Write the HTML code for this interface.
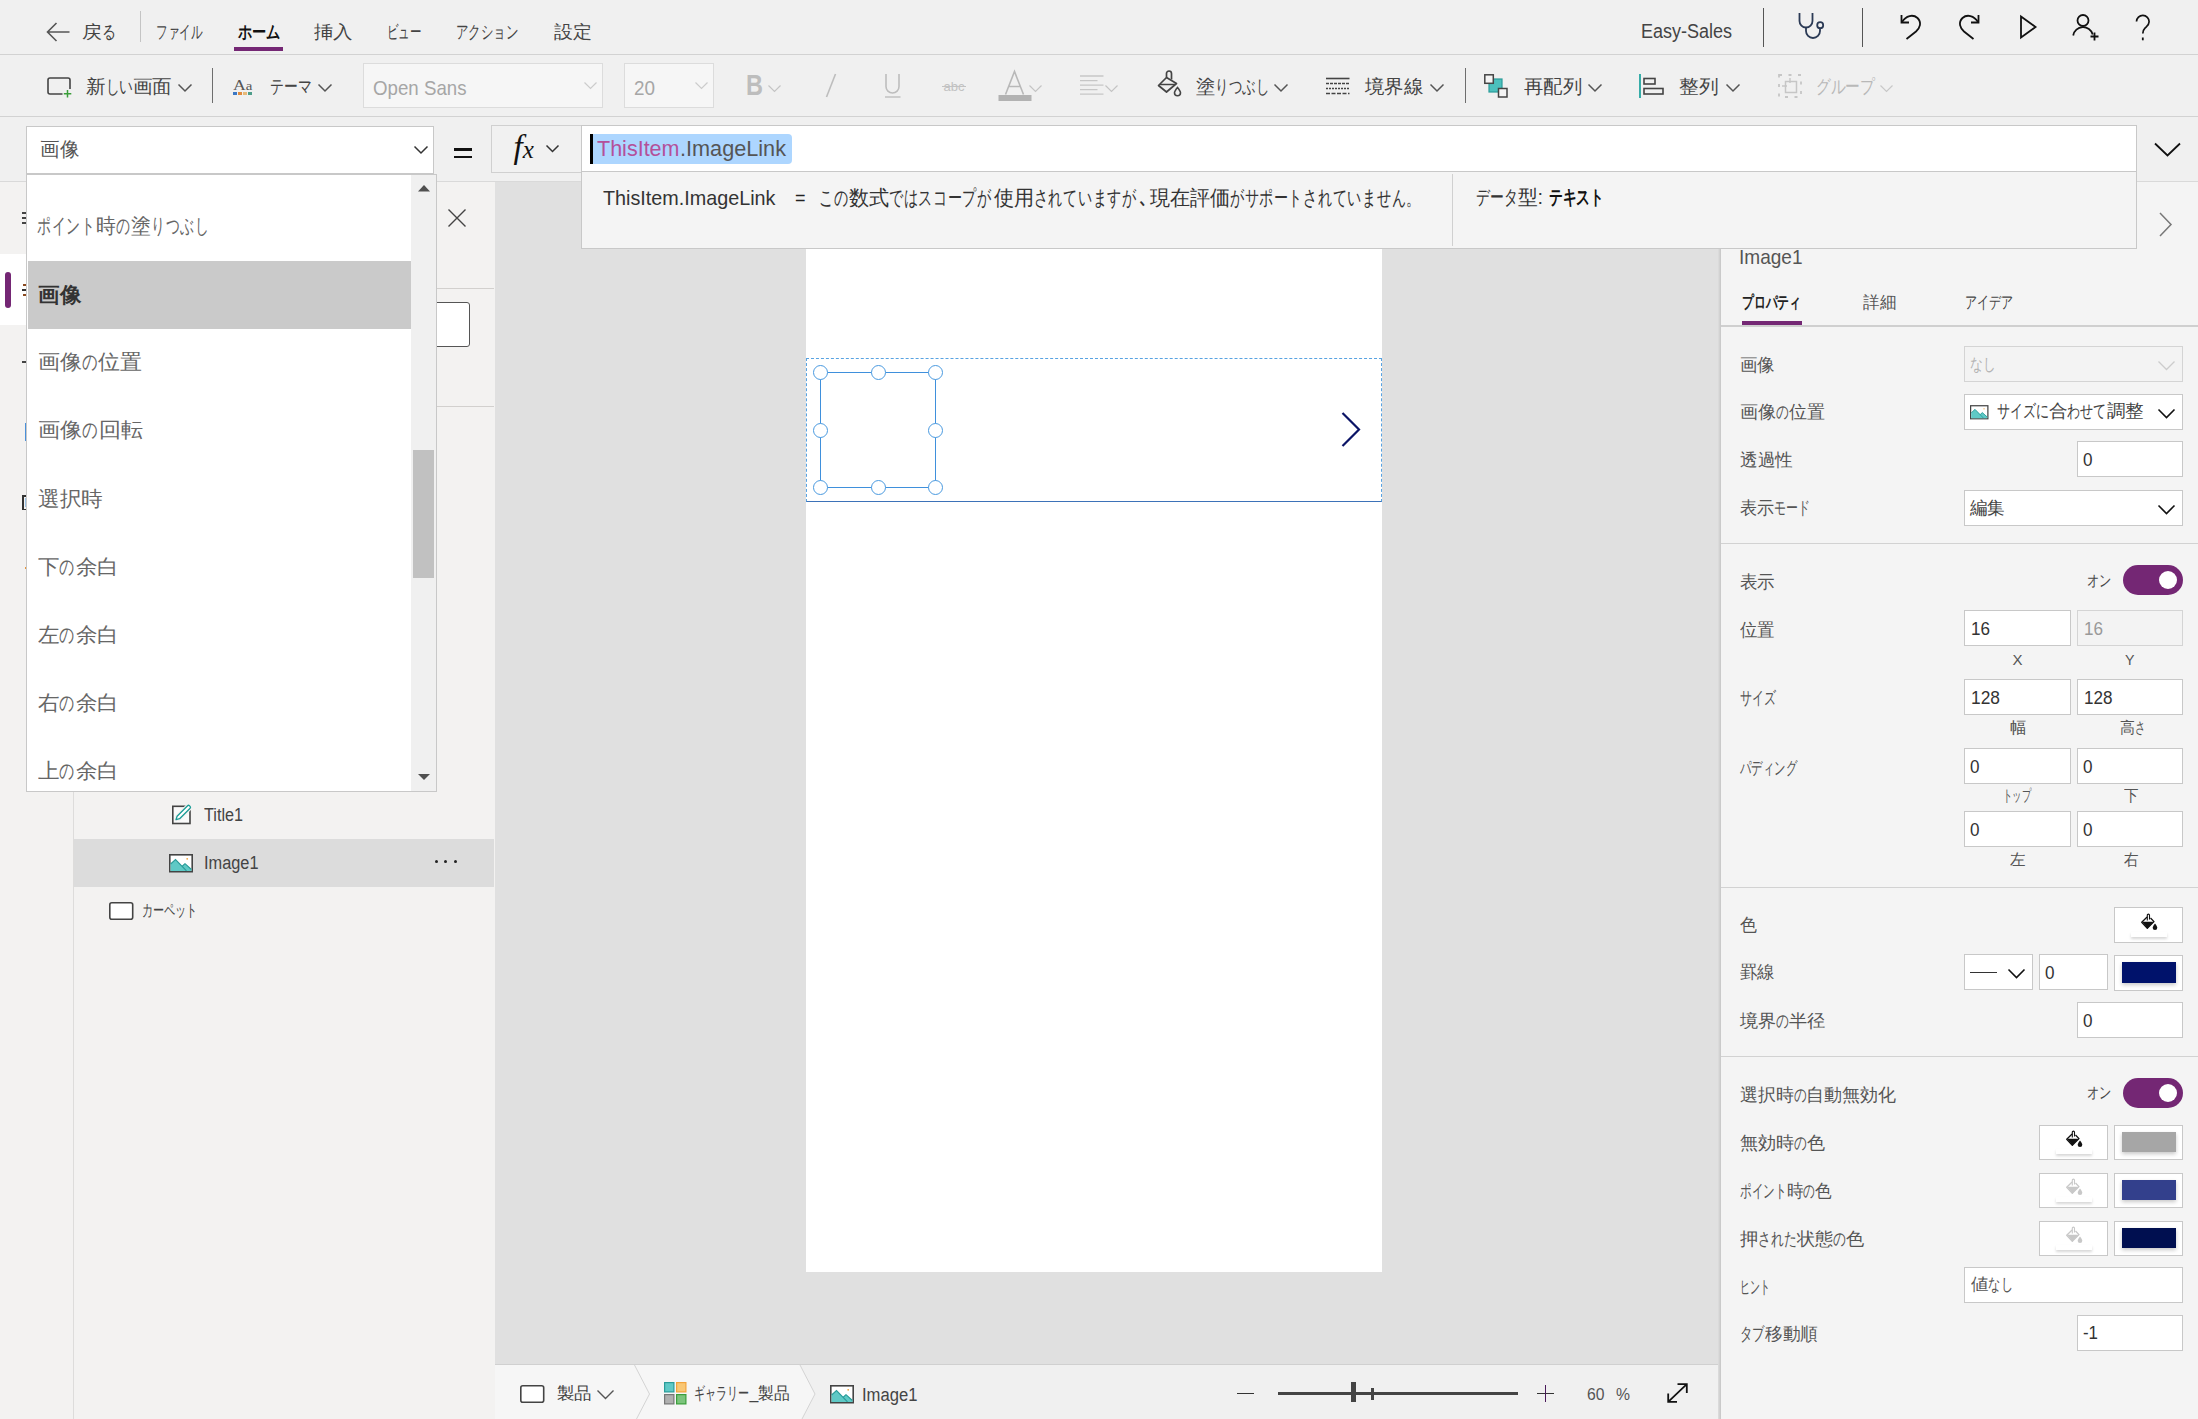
<!DOCTYPE html>
<html lang="ja">
<head>
<meta charset="utf-8">
<title>Power Apps Studio</title>
<style>
*{box-sizing:border-box;margin:0;padding:0}
html,body{width:2198px;height:1419px;overflow:hidden;background:#f0f0f0}
body{font-family:"Liberation Sans",sans-serif;color:#444;position:relative;font-size:18px}
.a{position:absolute}
.t{position:absolute;white-space:nowrap;line-height:1;transform-origin:0 50%;display:block}
svg{position:absolute;overflow:visible}
.k{display:inline-block;transform:scaleX(.70);transform-origin:0 50%}
</style>
</head>
<body>
<div class="a" style="left:0px;top:0px;width:2198px;height:54px;background:#f0f0f0;"></div>
<div class="a" style="left:0px;top:54px;width:2198px;height:1px;background:#d2d2d2;"></div>
<div class="a" style="left:0px;top:55px;width:2198px;height:61px;background:#f0f0f0;"></div>
<div class="a" style="left:0px;top:116px;width:2198px;height:1px;background:#d2d2d2;"></div>
<div class="a" style="left:0px;top:117px;width:2198px;height:64px;background:#f0f0f0;"></div>
<div class="a" style="left:0px;top:181px;width:2198px;height:1px;background:#d9d9d9;"></div>
<div class="a" style="left:0px;top:182px;width:73px;height:1237px;background:#f3f2f1;"></div>
<div class="a" style="left:73px;top:182px;width:1px;height:1237px;background:#dddcdb;"></div>
<div class="a" style="left:74px;top:182px;width:421px;height:1237px;background:#f3f2f1;"></div>
<div class="a" style="left:495px;top:182px;width:1224px;height:1182px;background:#e0e0e0;"></div>
<div class="a" style="left:806px;top:240px;width:576px;height:1032px;background:#fff;"></div>
<div class="a" style="left:495px;top:1364px;width:1224px;height:55px;background:#f0f0f0;"></div>
<div class="a" style="left:495px;top:1364px;width:1224px;height:1px;background:#d0d0d0;"></div>
<div class="a" style="left:1718px;top:182px;width:3px;height:1237px;background:#d0d0d0;background:linear-gradient(to right,#dedede,#c6c6c6);"></div>
<div class="a" style="left:1721px;top:182px;width:477px;height:1237px;background:#f4f4f4;"></div>
<svg style="left:46px;top:22px" width="24" height="20" viewBox="0 0 24 20"><path d="M23.5 10 H1.5 M10.5 1 L1.5 10 L10.5 19" fill="none" stroke="#555" stroke-width="1.6"/></svg>
<div class="a" style="left:139.5px;top:11px;width:1.5px;height:31px;background:#c4c4c4;"></div>
<div class="a" style="left:234px;top:47px;width:49px;height:4px;background:#742774;"></div>
<div class="a" style="left:1762.5px;top:8px;width:1.5px;height:38.5px;background:#555;"></div>
<div class="a" style="left:1861.5px;top:8px;width:1.5px;height:38.5px;background:#555;"></div>
<svg style="left:1797px;top:12px" width="28" height="28" viewBox="0 0 28 28"><path d="M2.5 1 v8 a6.5 6.5 0 0 0 13 0 v-8" fill="none" stroke="#2b3a55" stroke-width="1.8"/><path d="M9 15.5 v3.5 a7 7 0 0 0 14 0 v-2.5" fill="none" stroke="#2b3a55" stroke-width="1.8"/><circle cx="23.2" cy="13.2" r="3" fill="none" stroke="#2b3a55" stroke-width="1.8"/></svg>
<svg style="left:1900px;top:13px" width="22" height="27" viewBox="0 0 22 27"><path d="M1.5 2 v7.5 h7.5" fill="none" stroke="#111" stroke-width="1.8"/><path d="M2 9 C6 2.5 13 1 17.5 5 C22 9.5 20 15 16 18.5 L6.5 26" fill="none" stroke="#111" stroke-width="1.8"/></svg>
<svg style="left:1958px;top:13px" width="22" height="27" viewBox="0 0 22 27"><path d="M20.5 2 v7.5 h-7.5" fill="none" stroke="#111" stroke-width="1.8"/><path d="M20 9 C16 2.5 9 1 4.5 5 C0 9.5 2 15 6 18.5 L15.500 26" fill="none" stroke="#111" stroke-width="1.8"/></svg>
<svg style="left:2019px;top:15px" width="18" height="24" viewBox="0 0 18 24"><path d="M2 1.5 L16.5 12 L2 22.500 Z" fill="none" stroke="#111" stroke-width="1.8" stroke-linejoin="miter"/></svg>
<svg style="left:2072px;top:13px" width="28" height="28" viewBox="0 0 28 28"><circle cx="11" cy="7.5" r="5.5" fill="none" stroke="#111" stroke-width="1.8"/><path d="M1.2 22.500 a10 10 0 0 1 19.5 -1" fill="none" stroke="#111" stroke-width="1.8"/><path d="M22.500 19.500 v8 M18.500 23.5 h8" fill="none" stroke="#111" stroke-width="1.8"/></svg>
<svg style="left:2135px;top:14px" width="16" height="28" viewBox="0 0 16 28"><path d="M1.5 7.500 a6.300 6.300 0 0 1 12.600 0.300 c0 3.500 -2.500 4.800 -4.300 6.500 c-1.500 1.400 -2 2.500 -2 5.200" fill="none" stroke="#111" stroke-width="1.7"/><path d="M7.800 23.500 v2.800" stroke="#111" stroke-width="1.8"/></svg>
<svg style="left:47px;top:77px" width="25" height="20" viewBox="0 0 25 20"><rect x="1" y="1" width="22" height="16" rx="2" fill="none" stroke="#444" stroke-width="1.6"/><rect x="15.500" y="12" width="10" height="9" fill="#f0f0f0"/><path d="M20.500 13 v7.500 M16.800 16.800 h7.500" stroke="#3a9e3a" stroke-width="1.5"/></svg>
<svg style="left:177.5px;top:84.25px" width="14" height="7.5" viewBox="0 0 14 7.5"><path d="M0.5 0.5 L7.0 7.0 L13.5 0.5" fill="none" stroke="#555" stroke-width="1.5"/></svg>
<div class="a" style="left:212px;top:68px;width:1px;height:35px;background:#6e6e6e;"></div>
<div class="a" style="left:232.5px;top:91.5px;width:4.0px;height:3.5px;background:#3b78c4;"></div>
<div class="a" style="left:237.5px;top:91.5px;width:4.0px;height:3.5px;background:#e08a3c;"></div>
<div class="a" style="left:242.5px;top:91.5px;width:4.0px;height:3.5px;background:#e8b978;"></div>
<div class="a" style="left:247.5px;top:91.5px;width:4.0px;height:3.5px;background:#4e9d8a;"></div>
<svg style="left:318.0px;top:84.25px" width="14" height="7.5" viewBox="0 0 14 7.5"><path d="M0.5 0.5 L7.0 7.0 L13.5 0.5" fill="none" stroke="#555" stroke-width="1.5"/></svg>
<div class="a" style="left:363px;top:63px;width:240px;height:44.5px;background:#f6f6f6;border:1px solid #dcdcdc;"></div>
<svg style="left:584.0px;top:82.0px" width="13" height="7" viewBox="0 0 13 7"><path d="M0.5 0.5 L6.5 6.5 L12.5 0.5" fill="none" stroke="#ccc" stroke-width="1.2"/></svg>
<div class="a" style="left:624px;top:63px;width:90px;height:44.5px;background:#f6f6f6;border:1px solid #dcdcdc;"></div>
<svg style="left:694.5px;top:82.0px" width="13" height="7" viewBox="0 0 13 7"><path d="M0.5 0.5 L6.5 6.5 L12.5 0.5" fill="none" stroke="#ccc" stroke-width="1.2"/></svg>
<svg style="left:768.0px;top:84.5px" width="13" height="7" viewBox="0 0 13 7"><path d="M0.5 0.5 L6.5 6.5 L12.5 0.5" fill="none" stroke="#c4c4c4" stroke-width="1.2"/></svg>
<svg style="left:825px;top:73px" width="12" height="25" viewBox="0 0 12 25"><path d="M10.500 1 L1.5 24" stroke="#bdbdbd" stroke-width="1.6"/></svg>
<svg style="left:884px;top:73px" width="18" height="26" viewBox="0 0 18 26"><path d="M2 1 v12.500 a6.500 6.500 0 0 0 13 0 v-12.500" fill="none" stroke="#bdbdbd" stroke-width="1.6"/><path d="M1 24 h15.500" stroke="#bdbdbd" stroke-width="1.4"/></svg>
<div class="a" style="left:942px;top:86px;width:24px;height:1px;background:#c2c2c2;"></div>
<svg style="left:998px;top:70px" width="34" height="32" viewBox="0 0 34 32"><path d="M7.5 24.5 L16.500 1.5 L25.500 24.5 M10.800 16.500 h11.400" fill="none" stroke="#b8b8b8" stroke-width="1.6"/><rect x="0.5" y="25" width="33" height="6" fill="#b2b2b2"/></svg>
<svg style="left:1029.0px;top:84.5px" width="13" height="7" viewBox="0 0 13 7"><path d="M0.5 0.5 L6.5 6.5 L12.5 0.5" fill="none" stroke="#c4c4c4" stroke-width="1.2"/></svg>
<svg style="left:1080px;top:75px" width="24" height="21" viewBox="0 0 24 21"><path d="M0 1 h23.500 M0 5.600 h17.500 M0 10.100 h23.500 M0 14.700 h17.500 M0 19.200 h23.500" stroke="#c6c6c6" stroke-width="1.3"/></svg>
<svg style="left:1105.0px;top:84.5px" width="13" height="7" viewBox="0 0 13 7"><path d="M0.5 0.5 L6.5 6.5 L12.5 0.5" fill="none" stroke="#c4c4c4" stroke-width="1.2"/></svg>
<svg style="left:1157px;top:70px" width="25" height="26" viewBox="0 0 25 26"><path d="M9.500 7.500 L1.5 15.500 L9.500 22 L19.500 13.500 Z" fill="none" stroke="#444" stroke-width="1.7" stroke-linejoin="round"/><path d="M9.500 7.500 v-4 a2.500 2.500 0 0 1 5 0 v6" fill="none" stroke="#444" stroke-width="1.7"/><path d="M3 14.500 h15" stroke="#444" stroke-width="1.5"/><path d="M20.500 17.500 c-2 2.500 -3 4 -3 5.300 a3 3 0 0 0 6 0 c0 -1.300 -1 -2.800 -3 -5.300z" fill="none" stroke="#444" stroke-width="1.6"/></svg>
<svg style="left:1273.5px;top:84.25px" width="14" height="7.5" viewBox="0 0 14 7.5"><path d="M0.5 0.5 L7.0 7.0 L13.5 0.5" fill="none" stroke="#555" stroke-width="1.5"/></svg>
<svg style="left:1325.5px;top:77px" width="24" height="18" viewBox="0 0 24 18"><path d="M0 1.5 h23.500" stroke="#444" stroke-width="1.6"/><path d="M0 6.500 h23.500" stroke="#444" stroke-width="1.4" stroke-dasharray="3 1"/><path d="M0 11.500 h23.500" stroke="#444" stroke-width="1.4" stroke-dasharray="2 1"/><path d="M0 16.500 h23.500" stroke="#444" stroke-width="1.6" stroke-dasharray="4 1.5"/></svg>
<svg style="left:1430.0px;top:84.25px" width="14" height="7.5" viewBox="0 0 14 7.5"><path d="M0.5 0.5 L7.0 7.0 L13.5 0.5" fill="none" stroke="#555" stroke-width="1.5"/></svg>
<div class="a" style="left:1465px;top:68px;width:1px;height:35px;background:#6e6e6e;"></div>
<svg style="left:1484px;top:74px" width="24" height="24" viewBox="0 0 24 24"><rect x="5" y="5" width="13" height="13" fill="#4cc0bd" stroke="#2a9c99" stroke-width="1.2"/><rect x="0.8" y="0.8" width="8.5" height="8.5" fill="#f4f4f4" stroke="#444" stroke-width="1.5"/><rect x="14.500" y="14.500" width="8.5" height="8.5" fill="#f4f4f4" stroke="#444" stroke-width="1.5"/></svg>
<svg style="left:1587.5px;top:84.25px" width="14" height="7.5" viewBox="0 0 14 7.5"><path d="M0.5 0.5 L7.0 7.0 L13.5 0.5" fill="none" stroke="#555" stroke-width="1.5"/></svg>
<svg style="left:1639px;top:74px" width="26" height="24" viewBox="0 0 26 24"><path d="M1 0 v24" stroke="#22a5a0" stroke-width="1.8"/><rect x="5" y="4.500" width="11" height="5.500" fill="none" stroke="#444" stroke-width="1.6"/><rect x="5" y="14.500" width="19" height="5.500" fill="none" stroke="#444" stroke-width="1.6"/></svg>
<svg style="left:1725.5px;top:84.25px" width="14" height="7.5" viewBox="0 0 14 7.5"><path d="M0.5 0.5 L7.0 7.0 L13.5 0.5" fill="none" stroke="#555" stroke-width="1.5"/></svg>
<svg style="left:1778px;top:74px" width="24" height="24" viewBox="0 0 24 24"><rect x="1" y="1" width="22" height="22" fill="none" stroke="#c6c6c6" stroke-width="1.8" stroke-dasharray="3 6.500" /><rect x="7.500" y="7.500" width="11" height="11" fill="none" stroke="#c6c6c6" stroke-width="1.5"/><path d="M12 4 v5 M4 12 h5" stroke="#c6c6c6" stroke-width="1.4"/></svg>
<svg style="left:1880.0px;top:84.5px" width="13" height="7" viewBox="0 0 13 7"><path d="M0.5 0.5 L6.5 6.5 L12.5 0.5" fill="none" stroke="#c8c8c8" stroke-width="1.2"/></svg>
<div class="a" style="left:26px;top:126px;width:408px;height:48px;background:#fff;border:1px solid #c8c8c8;"></div>
<svg style="left:413.5px;top:146.25px" width="14" height="7.5" viewBox="0 0 14 7.5"><path d="M0.5 0.5 L7.0 7.0 L13.5 0.5" fill="none" stroke="#333" stroke-width="1.5"/></svg>
<div class="a" style="left:454px;top:148px;width:18px;height:2.5px;background:#111;"></div>
<div class="a" style="left:454px;top:155.5px;width:18px;height:2.5px;background:#111;"></div>
<div class="a" style="left:491px;top:125px;width:91px;height:47.5px;background:#f1f1f1;border:1px solid #d0d0d0;"></div>
<svg style="left:546.0px;top:145.0px" width="13" height="7" viewBox="0 0 13 7"><path d="M0.5 0.5 L6.5 6.5 L12.5 0.5" fill="none" stroke="#333" stroke-width="1.5"/></svg>
<div class="a" style="left:581px;top:125px;width:1555.5px;height:47px;background:#fff;border:1px solid #c8c8c8;"></div>
<div class="a" style="left:590px;top:134px;width:202px;height:30px;background:#add6ff;border-radius:4px;"></div>
<div class="a" style="left:590px;top:134px;width:3px;height:30px;background:#000;"></div>
<svg style="left:2154px;top:142px" width="27" height="15" viewBox="0 0 27 15"><path d="M1 1.500 L13.500 13.500 L26 1.500" fill="none" stroke="#111" stroke-width="1.8"/></svg>
<div class="a" style="left:581px;top:171px;width:1555.5px;height:78px;background:#f4f4f4;border:1px solid #c8c8c8;"></div>
<div class="a" style="left:1452px;top:174px;width:1px;height:72px;background:#d0d0d0;"></div>
<svg style="left:2159px;top:212px" width="13" height="25" viewBox="0 0 13 25"><path d="M1 1 L12 12.500 L1 24" fill="none" stroke="#777" stroke-width="1.5"/></svg>
<div class="a" style="left:0px;top:254px;width:73px;height:71px;background:#fff;"></div>
<div class="a" style="left:5px;top:272px;width:6px;height:36px;background:#742774;border-radius:3px;"></div>
<div class="a" style="left:22px;top:212px;width:4px;height:1.5px;background:#444;"></div>
<div class="a" style="left:22px;top:217px;width:4px;height:1.5px;background:#444;"></div>
<div class="a" style="left:22px;top:222px;width:4px;height:1.5px;background:#444;"></div>
<div class="a" style="left:23px;top:284px;width:3px;height:1.5px;background:#8a4a20;"></div>
<div class="a" style="left:22px;top:289px;width:4px;height:1.5px;background:#333;"></div>
<div class="a" style="left:23px;top:294px;width:3px;height:1.5px;background:#8a4a20;"></div>
<div class="a" style="left:22px;top:361px;width:4px;height:1.5px;background:#444;"></div>
<div class="a" style="left:25px;top:423px;width:2px;height:18px;background:#4a90d9;"></div>
<div class="a" style="left:22px;top:495px;width:2px;height:15px;background:#333;"></div>
<div class="a" style="left:24px;top:495px;width:2px;height:1.5px;background:#333;"></div>
<div class="a" style="left:24px;top:508.5px;width:2px;height:1.5px;background:#333;"></div>
<div class="a" style="left:24.5px;top:498px;width:2.0px;height:9px;background:#9cc3e6;"></div>
<div class="a" style="left:24.5px;top:567px;width:2.0px;height:2px;background:#e8963c;"></div>
<svg style="left:447.5px;top:209px" width="18" height="18" viewBox="0 0 18 18"><path d="M0.5 0.5 L17.5 17.5 M17.5 0.5 L0.5 17.5" stroke="#444" stroke-width="1.4"/></svg>
<div class="a" style="left:436px;top:288px;width:58px;height:1px;background:#d2d0ce;"></div>
<div class="a" style="left:400px;top:302px;width:70px;height:45px;background:#fff;border:1px solid #555;border-radius:3px;"></div>
<div class="a" style="left:436px;top:406px;width:58px;height:1px;background:#d2d0ce;"></div>
<svg style="left:172px;top:804px" width="20" height="21" viewBox="0 0 20 21"><rect x="0.8" y="2.3" width="17.2" height="17.2" fill="#fafafa" stroke="#444" stroke-width="1.6"/><path d="M4 15.600 L5.100 12.200 L15.600 1.700 a1.300 1.300 0 0 1 1.800 0 l0.700 0.700 a1.300 1.300 0 0 1 0 1.800 L7.600 14.700 Z" fill="#fff" stroke="#f3f2f1" stroke-width="3.6" stroke-linejoin="round"/><path d="M4 15.600 L5.100 12.200 L15.600 1.700 a1.300 1.300 0 0 1 1.800 0 l0.700 0.700 a1.300 1.300 0 0 1 0 1.800 L7.600 14.700 Z" fill="#fff" stroke="#1a9c96" stroke-width="1.300" stroke-linejoin="round"/></svg>
<div class="a" style="left:74px;top:839px;width:420px;height:48px;background:#dcdcdc;"></div>
<svg style="left:169px;top:854px" width="24" height="18.5" viewBox="0 0 24 18.5"><rect x="0.8" y="0.8" width="22.4" height="16.900" fill="#fff" stroke="#444" stroke-width="1.6"/><path d="M1.6 17 V10 L6.500 5.500 L13 12 L16 9.500 L22.400 15 V17 Z" fill="#5fc9c6"/><path d="M1.6 10 L6.500 5.500 L17.5 16.900 M13.500 12 L16 9.700 L22.400 15.500" fill="none" stroke="#2a9c99" stroke-width="1.1"/><circle cx="18.200" cy="4.800" r="0.9" fill="#f2a33c"/></svg>
<div class="a" style="left:434.5px;top:859.5px;width:3px;height:3px;border-radius:50%;background:#222"></div>
<div class="a" style="left:444.0px;top:859.5px;width:3px;height:3px;border-radius:50%;background:#222"></div>
<div class="a" style="left:454.0px;top:859.5px;width:3px;height:3px;border-radius:50%;background:#222"></div>
<svg style="left:109px;top:902px" width="24.5" height="18" viewBox="0 0 24.5 18"><rect x="0.8" y="0.8" width="22.900" height="16.400" rx="2" fill="#fff" stroke="#444" stroke-width="1.6"/></svg>
<div class="a" style="left:806px;top:249px;width:576px;height:1023px;background:#fff;"></div>
<div class="a" style="left:806px;top:357.5px;width:576px;height:144.500px;border:1px dashed #58a3e2;border-bottom:1.500px solid #3d72b8"></div>
<div class="a" style="left:819.5px;top:371.5px;width:116.500px;height:116px;border:1.3px solid #3f90dc"></div>
<div class="a" style="left:812.7px;top:364.7px;width:15px;height:15px;border-radius:50%;background:#fff;border:1.400px solid #4a9ae0"></div>
<div class="a" style="left:812.7px;top:422.5px;width:15px;height:15px;border-radius:50%;background:#fff;border:1.400px solid #4a9ae0"></div>
<div class="a" style="left:812.7px;top:479.7px;width:15px;height:15px;border-radius:50%;background:#fff;border:1.400px solid #4a9ae0"></div>
<div class="a" style="left:870.5px;top:364.7px;width:15px;height:15px;border-radius:50%;background:#fff;border:1.400px solid #4a9ae0"></div>
<div class="a" style="left:870.5px;top:479.7px;width:15px;height:15px;border-radius:50%;background:#fff;border:1.400px solid #4a9ae0"></div>
<div class="a" style="left:928.2px;top:364.7px;width:15px;height:15px;border-radius:50%;background:#fff;border:1.400px solid #4a9ae0"></div>
<div class="a" style="left:928.2px;top:422.5px;width:15px;height:15px;border-radius:50%;background:#fff;border:1.400px solid #4a9ae0"></div>
<div class="a" style="left:928.2px;top:479.7px;width:15px;height:15px;border-radius:50%;background:#fff;border:1.400px solid #4a9ae0"></div>
<svg style="left:1341px;top:412px" width="20" height="35" viewBox="0 0 20 35"><path d="M1.5 1 L18 17.5 L1.5 34" fill="none" stroke="#0b1466" stroke-width="2.2"/></svg>
<svg style="left:495px;top:1365px" width="325" height="54" viewBox="0 0 325 54"><path d="M0 0 H305 L320 29 L307 54 H0 Z" fill="#f6f6f6"/><path d="M139.500 0 L154.500 29 L141.500 54 M305 0 L320 29 L307 54" fill="none" stroke="#d4d4d4" stroke-width="1"/></svg>
<svg style="left:520px;top:1384.5px" width="24.5" height="18" viewBox="0 0 24.5 18"><rect x="0.8" y="0.8" width="22.900" height="16.400" rx="2" fill="#fff" stroke="#444" stroke-width="1.6"/></svg>
<svg style="left:597.0px;top:1389.5px" width="17" height="9" viewBox="0 0 17 9"><path d="M0.5 0.5 L8.5 8.5 L16.5 0.5" fill="none" stroke="#555" stroke-width="1.4"/></svg>
<svg style="left:664px;top:1382px" width="23" height="22.5" viewBox="0 0 23 22.5"><rect x="0.6" y="0.6" width="9.300" height="9.300" fill="#5fc9c6" stroke="#2a9c99" stroke-width="1.2"/><rect x="12.600" y="0.6" width="9.300" height="9.300" fill="#f9c774" stroke="#f2a33c" stroke-width="1.2"/><rect x="0.6" y="12.600" width="9.300" height="9.300" fill="#b0b0b0" stroke="#777" stroke-width="1.2"/><rect x="12.600" y="12.600" width="9.300" height="9.300" fill="#7cc47c" stroke="#3a9e3a" stroke-width="1.2"/></svg>
<svg style="left:830px;top:1384.5px" width="24" height="18.5" viewBox="0 0 24 18.5"><rect x="0.8" y="0.8" width="22.4" height="16.900" fill="#fff" stroke="#444" stroke-width="1.6"/><path d="M1.6 17 V10 L6.500 5.500 L13 12 L16 9.500 L22.400 15 V17 Z" fill="#5fc9c6"/><path d="M1.6 10 L6.500 5.500 L17.5 16.900 M13.500 12 L16 9.700 L22.400 15.500" fill="none" stroke="#2a9c99" stroke-width="1.1"/><circle cx="18.200" cy="4.800" r="0.9" fill="#f2a33c"/></svg>
<div class="a" style="left:1237px;top:1392.5px;width:17px;height:1.5px;background:#333;"></div>
<div class="a" style="left:1278px;top:1391.5px;width:240px;height:3.0px;background:#444;"></div>
<div class="a" style="left:1350.5px;top:1381.5px;width:5.5px;height:20.5px;background:#444;"></div>
<div class="a" style="left:1371px;top:1387.5px;width:2.5px;height:12.0px;background:#444;"></div>
<div class="a" style="left:1537px;top:1392.5px;width:17px;height:1.5px;background:#333;"></div>
<div class="a" style="left:1544.5px;top:1384.5px;width:1.5px;height:17.5px;background:#4a1a5a;"></div>
<svg style="left:1667px;top:1383px" width="21" height="20" viewBox="0 0 21 20"><path d="M1.2 18.800 L19.800 1.2 M10.500 1.2 H19.800 V10 M1.2 10.500 V18.800 H10" fill="none" stroke="#111" stroke-width="1.8"/></svg>
<div class="a" style="left:1742px;top:321px;width:60px;height:4px;background:#742774;"></div>
<div class="a" style="left:1721px;top:325px;width:477px;height:1.5px;background:#cfcfcf;"></div>
<div class="a" style="left:1964px;top:346px;width:218.5px;height:35.5px;background:#f3f3f3;border:1px solid #d4d4d4;"></div>
<svg style="left:2158.0px;top:361.0px" width="17" height="9" viewBox="0 0 17 9"><path d="M0.5 0.5 L8.5 8.5 L16.5 0.5" fill="none" stroke="#ccc" stroke-width="1.3"/></svg>
<div class="a" style="left:1964px;top:394px;width:218.5px;height:35.5px;background:#fff;border:1px solid #c8c8c8;"></div>
<svg style="left:1970px;top:405px" width="18.5" height="14.5" viewBox="0 0 24 18.5"><rect x="0.8" y="0.8" width="22.4" height="16.900" fill="#fff" stroke="#444" stroke-width="1.6"/><path d="M1.6 17 V10 L6.500 5.500 L13 12 L16 9.500 L22.400 15 V17 Z" fill="#5fc9c6"/><path d="M1.6 10 L6.500 5.500 L17.5 16.900 M13.500 12 L16 9.700 L22.400 15.500" fill="none" stroke="#2a9c99" stroke-width="1.1"/><circle cx="18.200" cy="4.800" r="0.9" fill="#f2a33c"/></svg>
<svg style="left:2158.0px;top:408.5px" width="17" height="9" viewBox="0 0 17 9"><path d="M0.5 0.5 L8.5 8.5 L16.5 0.5" fill="none" stroke="#111" stroke-width="1.6"/></svg>
<div class="a" style="left:2077px;top:441px;width:105.5px;height:36px;background:#fff;border:1px solid #c8c8c8;"></div>
<div class="a" style="left:1964px;top:490px;width:218.5px;height:35.5px;background:#fff;border:1px solid #c8c8c8;"></div>
<svg style="left:2158.0px;top:504.5px" width="17" height="9" viewBox="0 0 17 9"><path d="M0.5 0.5 L8.5 8.5 L16.5 0.5" fill="none" stroke="#111" stroke-width="1.6"/></svg>
<div class="a" style="left:1721px;top:543px;width:477px;height:1px;background:#d2d2d2;"></div>
<div class="a" style="left:2123px;top:565px;width:60px;height:30px;border-radius:15px;background:#742774"></div>
<div class="a" style="left:2159px;top:571px;width:18px;height:18px;border-radius:50%;background:#fff"></div>
<div class="a" style="left:1964px;top:610px;width:106.5px;height:35.5px;background:#fff;border:1px solid #c8c8c8;"></div>
<div class="a" style="left:2077px;top:610px;width:105.69999999999982px;height:35.5px;background:#f3f3f3;border:1px solid #d4d4d4;"></div>
<div class="a" style="left:1964px;top:679px;width:106.5px;height:35.5px;background:#fff;border:1px solid #c8c8c8;"></div>
<div class="a" style="left:2077px;top:679px;width:105.69999999999982px;height:35.5px;background:#fff;border:1px solid #c8c8c8;"></div>
<div class="a" style="left:1964px;top:748px;width:106.5px;height:35.5px;background:#fff;border:1px solid #c8c8c8;"></div>
<div class="a" style="left:2077px;top:748px;width:105.69999999999982px;height:35.5px;background:#fff;border:1px solid #c8c8c8;"></div>
<div class="a" style="left:1964px;top:811px;width:106.5px;height:35.5px;background:#fff;border:1px solid #c8c8c8;"></div>
<div class="a" style="left:2077px;top:811px;width:105.69999999999982px;height:35.5px;background:#fff;border:1px solid #c8c8c8;"></div>
<div class="a" style="left:1721px;top:887px;width:477px;height:1px;background:#d2d2d2;"></div>
<div class="a" style="left:2114px;top:907px;width:68.5px;height:35.5px;background:#fff;border:1px solid #c8c8c8;"></div>
<svg style="left:2140.5px;top:912.5px" width="17" height="18" viewBox="0 0 17 18"><path d="M6.100 4 L0.700 9.300 L6.300 15.400 L13 8.600 L9.500 5" fill="none" stroke="#111" stroke-width="1.3" stroke-linejoin="round"/><path d="M1.200 8.800 H12.800 L6.300 15.400 Z" fill="#111"/><path d="M6.300 7.500 V2.200 a1.100 1.100 0 0 1 2.200 0 V6.500" fill="none" stroke="#111" stroke-width="1.100"/><path d="M14 10.500 c1.500 2 2.300 3.200 2.300 4.200 a2.300 2.300 0 0 1 -4.600 0 c0 -1 0.800 -2.200 2.300 -4.200z" fill="#111"/></svg>
<div class="a" style="left:2130.8px;top:931.7px;width:36.400px;height:5px;background:#fff;box-shadow:0 2px 3px rgba(0,0,0,.16)"></div>
<div class="a" style="left:1964px;top:954px;width:68.5px;height:36px;background:#fff;border:1px solid #c8c8c8;"></div>
<div class="a" style="left:1969.5px;top:971.8px;width:27.5px;height:1.2000000000000455px;background:#333;"></div>
<svg style="left:2008.3px;top:969.0px" width="17" height="9" viewBox="0 0 17 9"><path d="M0.5 0.5 L8.5 8.5 L16.5 0.5" fill="none" stroke="#111" stroke-width="1.6"/></svg>
<div class="a" style="left:2039px;top:954px;width:68.5px;height:36px;background:#fff;border:1px solid #c8c8c8;"></div>
<div class="a" style="left:2114px;top:955px;width:68.5px;height:35.5px;background:#fff;border:1px solid #c8c8c8;"></div>
<div class="a" style="left:2121.8px;top:962px;width:54px;height:20.800px;background:#00126b;box-shadow:0 2px 4px rgba(0,0,0,.22)"></div>
<div class="a" style="left:2077px;top:1002px;width:105.69999999999982px;height:35.5px;background:#fff;border:1px solid #c8c8c8;"></div>
<div class="a" style="left:1721px;top:1056px;width:477px;height:1px;background:#d2d2d2;"></div>
<div class="a" style="left:2123px;top:1078px;width:60px;height:30px;border-radius:15px;background:#742774"></div>
<div class="a" style="left:2159px;top:1084px;width:18px;height:18px;border-radius:50%;background:#fff"></div>
<div class="a" style="left:2039px;top:1124.5px;width:68.5px;height:35.5px;background:#fff;border:1px solid #c8c8c8;"></div>
<svg style="left:2065.5px;top:1130.0px" width="17" height="18" viewBox="0 0 17 18"><path d="M6.100 4 L0.700 9.300 L6.300 15.400 L13 8.600 L9.500 5" fill="none" stroke="#111" stroke-width="1.3" stroke-linejoin="round"/><path d="M1.200 8.800 H12.800 L6.300 15.400 Z" fill="#111"/><path d="M6.300 7.500 V2.200 a1.100 1.100 0 0 1 2.200 0 V6.500" fill="none" stroke="#111" stroke-width="1.100"/><path d="M14 10.500 c1.500 2 2.300 3.200 2.300 4.200 a2.300 2.300 0 0 1 -4.600 0 c0 -1 0.800 -2.200 2.300 -4.200z" fill="#111"/></svg>
<div class="a" style="left:2055.8px;top:1149.2px;width:36.400px;height:5px;background:#fff;box-shadow:0 2px 3px rgba(0,0,0,.16)"></div>
<div class="a" style="left:2114px;top:1124.5px;width:68.5px;height:35.5px;background:#fff;border:1px solid #c8c8c8;"></div>
<div class="a" style="left:2121.8px;top:1131.5px;width:54px;height:20.800px;background:#a6a6a6;box-shadow:0 2px 4px rgba(0,0,0,.22)"></div>
<div class="a" style="left:2039px;top:1172.5px;width:68.5px;height:35.5px;background:#fff;border:1px solid #c8c8c8;"></div>
<svg style="left:2065.5px;top:1178.0px" width="17" height="18" viewBox="0 0 17 18"><path d="M6.100 4 L0.700 9.300 L6.300 15.400 L13 8.600 L9.500 5" fill="none" stroke="#c8c8c8" stroke-width="1.3" stroke-linejoin="round"/><path d="M1.200 8.800 H12.800 L6.300 15.400 Z" fill="#c8c8c8"/><path d="M6.300 7.500 V2.200 a1.100 1.100 0 0 1 2.200 0 V6.500" fill="none" stroke="#c8c8c8" stroke-width="1.100"/><path d="M14 10.500 c1.500 2 2.300 3.200 2.300 4.200 a2.300 2.300 0 0 1 -4.600 0 c0 -1 0.800 -2.200 2.300 -4.200z" fill="#c8c8c8"/></svg>
<div class="a" style="left:2055.8px;top:1197.2px;width:36.400px;height:5px;background:#fff;box-shadow:0 2px 3px rgba(0,0,0,.16)"></div>
<div class="a" style="left:2114px;top:1172.5px;width:68.5px;height:35.5px;background:#fff;border:1px solid #c8c8c8;"></div>
<div class="a" style="left:2121.8px;top:1179.5px;width:54px;height:20.800px;background:#33408c;box-shadow:0 2px 4px rgba(0,0,0,.22)"></div>
<div class="a" style="left:2039px;top:1220.5px;width:68.5px;height:35.5px;background:#fff;border:1px solid #c8c8c8;"></div>
<svg style="left:2065.5px;top:1226.0px" width="17" height="18" viewBox="0 0 17 18"><path d="M6.100 4 L0.700 9.300 L6.300 15.400 L13 8.600 L9.500 5" fill="none" stroke="#c8c8c8" stroke-width="1.3" stroke-linejoin="round"/><path d="M1.200 8.800 H12.800 L6.300 15.400 Z" fill="#c8c8c8"/><path d="M6.300 7.500 V2.200 a1.100 1.100 0 0 1 2.200 0 V6.500" fill="none" stroke="#c8c8c8" stroke-width="1.100"/><path d="M14 10.500 c1.500 2 2.300 3.200 2.300 4.200 a2.300 2.300 0 0 1 -4.600 0 c0 -1 0.800 -2.200 2.300 -4.200z" fill="#c8c8c8"/></svg>
<div class="a" style="left:2055.8px;top:1245.2px;width:36.400px;height:5px;background:#fff;box-shadow:0 2px 3px rgba(0,0,0,.16)"></div>
<div class="a" style="left:2114px;top:1220.5px;width:68.5px;height:35.5px;background:#fff;border:1px solid #c8c8c8;"></div>
<div class="a" style="left:2121.8px;top:1227.5px;width:54px;height:20.800px;background:#000f50;box-shadow:0 2px 4px rgba(0,0,0,.22)"></div>
<div class="a" style="left:1964px;top:1267px;width:218.69999999999982px;height:35.5px;background:#fff;border:1px solid #c8c8c8;"></div>
<div class="a" style="left:2077px;top:1315px;width:105.69999999999982px;height:35.5px;background:#fff;border:1px solid #c8c8c8;"></div>
<div class="a" style="left:26px;top:174px;width:410.5px;height:617.5px;background:#fff;border:1px solid #c8c8c8;"></div>
<div class="a" style="left:411px;top:175px;width:24.5px;height:615.5px;background:#f0f0f0;"></div>
<div class="a" style="left:28px;top:261px;width:383px;height:67.5px;background:#cacaca;"></div>
<div class="a" style="left:412.5px;top:450px;width:21.5px;height:127.5px;background:#c1c1c1;"></div>
<svg style="left:417.5px;top:184.5px" width="12" height="6.5" viewBox="0 0 12 6.5"><path d="M0 6.500 L6 0 L12 6.500 Z" fill="#505050"/></svg>
<svg style="left:417.5px;top:773.5px" width="12" height="6" viewBox="0 0 12 6"><path d="M0 0 L6 6 L12 0 Z" fill="#505050"/></svg>
<span class="t" style="left:82px;top:23.1px;font-size:18px;color:#444;transform:scaleX(1.111);">戻<span class="k" style="margin-right:-5.4px">る</span></span>
<span class="t" style="left:155.5px;top:23.1px;font-size:18px;color:#444;transform:scaleX(0.923);"><span class="k" style="margin-right:-21.6px">ファイル</span></span>
<span class="t" style="left:237.5px;top:23.1px;font-size:18px;color:#111;font-weight:bold;transform:scaleX(1.124);"><span class="k" style="margin-right:-16.2px">ホーム</span></span>
<span class="t" style="left:314px;top:23.1px;font-size:18px;color:#444;transform:scaleX(1.083);">挿入</span>
<span class="t" style="left:387px;top:23.1px;font-size:18px;color:#444;transform:scaleX(0.912);"><span class="k" style="margin-right:-16.2px">ビュー</span></span>
<span class="t" style="left:455.5px;top:23.1px;font-size:18px;color:#444;transform:scaleX(0.992);"><span class="k" style="margin-right:-27.0px">アクション</span></span>
<span class="t" style="left:554px;top:23.1px;font-size:18px;color:#444;transform:scaleX(1.056);">設定</span>
<span class="t" style="left:1640.5px;top:20.5px;font-size:20px;color:#444;transform:scaleX(0.900);">Easy-Sales</span>
<span class="t" style="left:85.5px;top:76.6px;font-size:19px;color:#444;transform:scaleX(1.029);">新<span class="k" style="margin-right:-11.4px">しい</span>画面</span>
<span class="t" style="left:233px;top:76.8px;font-size:15.5px;color:#555;font-family:'Liberation Serif',serif;transform:scaleX(1.148);">A<span style="font-size:13px">a</span></span>
<span class="t" style="left:270px;top:76.6px;font-size:19px;color:#444;transform:scaleX(1.040);"><span class="k" style="margin-right:-17.1px">テーマ</span></span>
<span class="t" style="left:372.5px;top:76.5px;font-size:21px;color:#a6a6a6;transform:scaleX(0.890);">Open Sans</span>
<span class="t" style="left:633.5px;top:76.5px;font-size:21px;color:#a6a6a6;transform:scaleX(0.899);">20</span>
<span class="t" style="left:745.5px;top:71.0px;font-size:29px;color:#bdbdbd;font-weight:bold;transform:scaleX(0.811);">B</span>
<span class="t" style="left:943.5px;top:79.5px;font-size:13px;color:#c2c2c2;">abc</span>
<span class="t" style="left:1195.5px;top:76.6px;font-size:19px;color:#444;transform:scaleX(1.011);">塗<span class="k" style="margin-right:-22.8px">りつぶし</span></span>
<span class="t" style="left:1364.5px;top:76.6px;font-size:19px;color:#444;transform:scaleX(1.026);">境界線</span>
<span class="t" style="left:1523.5px;top:76.6px;font-size:19px;color:#444;transform:scaleX(1.018);">再配列</span>
<span class="t" style="left:1679px;top:76.6px;font-size:19px;color:#444;transform:scaleX(1.039);">整列</span>
<span class="t" style="left:1815.5px;top:76.6px;font-size:19px;color:#b8b8b8;transform:scaleX(1.109);"><span class="k" style="margin-right:-22.8px">グループ</span></span>
<span class="t" style="left:39.5px;top:139.1px;font-size:20px;color:#555;transform:scaleX(0.975);">画像</span>
<span class="t" style="left:513.5px;top:130.5px;font-size:33px;color:#111;font-style:italic;font-family:'Liberation Serif',serif;"><span style="letter-spacing:0px">f</span><span style="font-size:25px">x</span></span>
<span class="t" style="left:597px;top:137.5px;font-size:22px;color:#b4509a;transform:scaleX(0.978);">ThisItem</span>
<span class="t" style="left:680px;top:137.5px;font-size:22px;color:#555;transform:scaleX(0.985);">.ImageLink</span>
<span class="t" style="left:603px;top:186.5px;font-size:21px;color:#333;transform:scaleX(0.941);">ThisItem.ImageLink</span>
<span class="t" style="left:795px;top:188.0px;font-size:20px;color:#222;transform:scaleX(0.898);">=</span>
<span class="t" style="left:818.5px;top:186.6px;font-size:21px;color:#333;transform:scaleX(0.958);"><span class="k" style="margin-right:-12.6px">この</span>数式<span class="k" style="margin-right:-44.1px">ではスコープが</span>使用<span class="k" style="margin-right:-44.1px">されていますが</span>､現在評価<span class="k" style="margin-right:-81.9px">がサポートされていません。</span></span>
<span class="t" style="left:1476px;top:187.1px;font-size:20px;color:#333;transform:scaleX(0.992);"><span class="k" style="margin-right:-18.0px">データ</span>型:</span>
<span class="t" style="left:1549px;top:187.1px;font-size:20px;color:#111;font-weight:bold;transform:scaleX(0.982);"><span class="k" style="margin-right:-24.0px">テキスト</span></span>
<span class="t" style="left:203.5px;top:805.5px;font-size:18px;color:#444;transform:scaleX(0.899);">Title1</span>
<span class="t" style="left:203.5px;top:853.5px;font-size:18px;color:#444;transform:scaleX(0.908);">Image1</span>
<span class="t" style="left:142px;top:901.7px;font-size:17px;color:#444;transform:scaleX(0.933);"><span class="k" style="margin-right:-25.5px">カーペット</span></span>
<span class="t" style="left:556.5px;top:1384.7px;font-size:17px;color:#444;transform:scaleX(1.029);">製品</span>
<span class="t" style="left:694px;top:1384.7px;font-size:17px;color:#444;transform:scaleX(0.932);"><span class="k" style="margin-right:-25.5px">ギャラリー</span>_製品</span>
<span class="t" style="left:861.5px;top:1385.5px;font-size:18px;color:#444;transform:scaleX(0.924);">Image1</span>
<span class="t" style="left:1586.5px;top:1385.5px;font-size:17px;color:#555;transform:scaleX(0.925);">60</span>
<span class="t" style="left:1616px;top:1385.5px;font-size:17px;color:#555;transform:scaleX(0.926);">%</span>
<span class="t" style="left:1738.5px;top:246.0px;font-size:21px;color:#555;transform:scaleX(0.907);">Image1</span>
<span class="t" style="left:1741.5px;top:293.7px;font-size:17px;color:#222;font-weight:bold;transform:scaleX(0.992);"><span class="k" style="margin-right:-25.5px">プロパティ</span></span>
<span class="t" style="left:1862.5px;top:293.7px;font-size:17px;color:#555;transform:scaleX(0.971);">詳細</span>
<span class="t" style="left:1964.5px;top:293.7px;font-size:17px;color:#444;transform:scaleX(1.008);"><span class="k" style="margin-right:-20.4px">アイデア</span></span>
<span class="t" style="left:1739.5px;top:355.6px;font-size:18px;color:#555;transform:scaleX(0.972);">画像</span>
<span class="t" style="left:1970px;top:356.2px;font-size:17px;color:#b4b4b4;transform:scaleX(1.071);"><span class="k" style="margin-right:-10.2px">なし</span></span>
<span class="t" style="left:1739.5px;top:403.1px;font-size:18px;color:#555;transform:scaleX(1.005);">画像<span class="k" style="margin-right:-5.4px">の</span>位置</span>
<span class="t" style="left:1996.5px;top:402.1px;font-size:18px;color:#444;transform:scaleX(1.034);"><span class="k" style="margin-right:-21.6px">サイズに</span>合<span class="k" style="margin-right:-16.2px">わせて</span>調整</span>
<span class="t" style="left:1739.5px;top:451.1px;font-size:18px;color:#555;transform:scaleX(0.981);">透過性</span>
<span class="t" style="left:2082.5px;top:450.8px;font-size:18px;color:#333;transform:scaleX(0.949);">0</span>
<span class="t" style="left:1739.5px;top:499.1px;font-size:18px;color:#555;transform:scaleX(0.948);">表示<span class="k" style="margin-right:-16.2px">モード</span></span>
<span class="t" style="left:1970px;top:498.6px;font-size:18px;color:#444;transform:scaleX(0.972);">編集</span>
<span class="t" style="left:1739.5px;top:573.1px;font-size:18px;color:#555;transform:scaleX(0.972);">表示</span>
<span class="t" style="left:2086.5px;top:572.7px;font-size:16px;color:#444;transform:scaleX(1.093);"><span class="k" style="margin-right:-9.6px">オン</span></span>
<span class="t" style="left:1739.5px;top:620.6px;font-size:18px;color:#555;transform:scaleX(0.972);">位置</span>
<span class="t" style="left:1970.5px;top:620.0px;font-size:18px;color:#333;transform:scaleX(0.949);">16</span>
<span class="t" style="left:2083.5px;top:620.0px;font-size:18px;color:#999;transform:scaleX(0.949);">16</span>
<span class="t" style="left:2012.5px;top:652.3px;font-size:15px;color:#555;">X</span>
<span class="t" style="left:2125px;top:652.3px;font-size:15px;color:#555;transform:scaleX(0.949);">Y</span>
<span class="t" style="left:1739.5px;top:689.1px;font-size:18px;color:#555;transform:scaleX(0.952);"><span class="k" style="margin-right:-16.2px">サイズ</span></span>
<span class="t" style="left:1970.5px;top:689.0px;font-size:18px;color:#333;transform:scaleX(0.965);">128</span>
<span class="t" style="left:2083.5px;top:689.0px;font-size:18px;color:#333;transform:scaleX(0.949);">128</span>
<span class="t" style="left:2009.5px;top:719.9px;font-size:15.5px;color:#555;transform:scaleX(1.031);">幅</span>
<span class="t" style="left:2119.5px;top:719.9px;font-size:15.5px;color:#555;transform:scaleX(0.934);">高<span class="k" style="margin-right:-4.7px">さ</span></span>
<span class="t" style="left:1739.5px;top:758.6px;font-size:18px;color:#555;transform:scaleX(0.905);"><span class="k" style="margin-right:-27.0px">パディング</span></span>
<span class="t" style="left:1970px;top:757.5px;font-size:18px;color:#333;transform:scaleX(0.949);">0</span>
<span class="t" style="left:2082.5px;top:757.5px;font-size:18px;color:#333;transform:scaleX(0.949);">0</span>
<span class="t" style="left:2002.5px;top:787.9px;font-size:15.5px;color:#555;transform:scaleX(0.838);"><span class="k" style="margin-right:-14.0px">トップ</span></span>
<span class="t" style="left:2123.5px;top:787.9px;font-size:15.5px;color:#555;transform:scaleX(0.906);">下</span>
<span class="t" style="left:1970px;top:820.5px;font-size:18px;color:#333;transform:scaleX(0.949);">0</span>
<span class="t" style="left:2082.5px;top:820.5px;font-size:18px;color:#333;transform:scaleX(0.949);">0</span>
<span class="t" style="left:2010px;top:852.2px;font-size:15.5px;color:#555;transform:scaleX(0.969);">左</span>
<span class="t" style="left:2123.5px;top:852.2px;font-size:15.5px;color:#555;transform:scaleX(0.906);">右</span>
<span class="t" style="left:1739.5px;top:916.1px;font-size:18px;color:#555;transform:scaleX(0.944);">色</span>
<span class="t" style="left:1739.5px;top:963.3px;font-size:18px;color:#555;transform:scaleX(0.972);">罫線</span>
<span class="t" style="left:2045px;top:963.7px;font-size:18px;color:#333;transform:scaleX(0.949);">0</span>
<span class="t" style="left:1739.5px;top:1011.6px;font-size:18px;color:#555;transform:scaleX(1.011);">境界<span class="k" style="margin-right:-5.4px">の</span>半径</span>
<span class="t" style="left:2082.5px;top:1011.5px;font-size:18px;color:#333;transform:scaleX(0.949);">0</span>
<span class="t" style="left:1739.5px;top:1085.6px;font-size:18px;color:#555;">選択時<span class="k" style="margin-right:-5.4px">の</span>自動無効化</span>
<span class="t" style="left:2086.5px;top:1085.2px;font-size:16px;color:#444;transform:scaleX(1.093);"><span class="k" style="margin-right:-9.6px">オン</span></span>
<span class="t" style="left:1739.5px;top:1134.0px;font-size:18px;color:#555;transform:scaleX(1.005);">無効時<span class="k" style="margin-right:-5.4px">の</span>色</span>
<span class="t" style="left:1739.5px;top:1181.6px;font-size:18px;color:#555;transform:scaleX(0.924);"><span class="k" style="margin-right:-21.6px">ポイント</span>時<span class="k" style="margin-right:-5.4px">の</span>色</span>
<span class="t" style="left:1739.5px;top:1229.6px;font-size:18px;color:#555;transform:scaleX(1.013);">押<span class="k" style="margin-right:-16.2px">された</span>状態<span class="k" style="margin-right:-5.4px">の</span>色</span>
<span class="t" style="left:1739.5px;top:1277.6px;font-size:18px;color:#555;transform:scaleX(0.793);"><span class="k" style="margin-right:-16.2px">ヒント</span></span>
<span class="t" style="left:1971px;top:1276.2px;font-size:17px;color:#555;transform:scaleX(1.029);">値<span class="k" style="margin-right:-10.2px">なし</span></span>
<span class="t" style="left:1739.5px;top:1324.9px;font-size:18px;color:#555;transform:scaleX(0.985);"><span class="k" style="margin-right:-10.8px">タブ</span>移動順</span>
<span class="t" style="left:2083px;top:1324.0px;font-size:18px;color:#333;transform:scaleX(0.937);">-1</span>
<span class="t" style="left:37px;top:215.1px;font-size:21px;color:#666;transform:scaleX(0.944);"><span class="k" style="margin-right:-25.2px">ポイント</span>時<span class="k" style="margin-right:-6.3px">の</span>塗<span class="k" style="margin-right:-25.2px">りつぶし</span></span>
<span class="t" style="left:37.5px;top:284.1px;font-size:21px;color:#333;font-weight:bold;transform:scaleX(1.024);">画像</span>
<span class="t" style="left:37.5px;top:351.1px;font-size:21px;color:#666;transform:scaleX(1.048);">画像<span class="k" style="margin-right:-6.3px">の</span>位置</span>
<span class="t" style="left:37.5px;top:419.1px;font-size:21px;color:#666;transform:scaleX(1.053);">画像<span class="k" style="margin-right:-6.3px">の</span>回転</span>
<span class="t" style="left:37.5px;top:487.6px;font-size:21px;color:#666;transform:scaleX(1.032);">選択時</span>
<span class="t" style="left:37.5px;top:556.1px;font-size:21px;color:#666;transform:scaleX(1.023);">下<span class="k" style="margin-right:-6.3px">の</span>余白</span>
<span class="t" style="left:37.5px;top:623.6px;font-size:21px;color:#666;transform:scaleX(1.023);">左<span class="k" style="margin-right:-6.3px">の</span>余白</span>
<span class="t" style="left:37.5px;top:691.6px;font-size:21px;color:#666;transform:scaleX(1.023);">右<span class="k" style="margin-right:-6.3px">の</span>余白</span>
<span class="t" style="left:37.5px;top:759.6px;font-size:21px;color:#666;transform:scaleX(1.023);">上<span class="k" style="margin-right:-6.3px">の</span>余白</span>
</body>
</html>
